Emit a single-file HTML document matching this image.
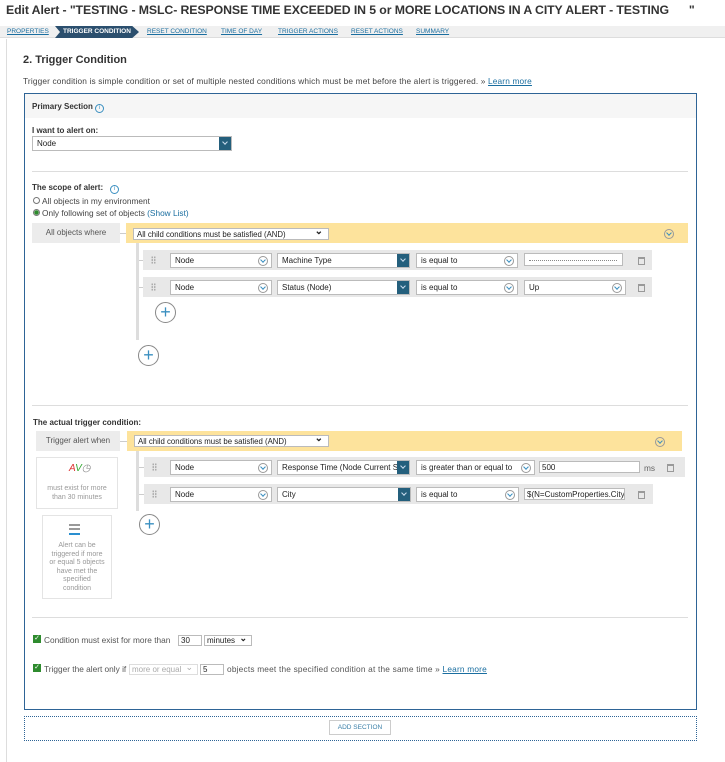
<!DOCTYPE html>
<html><head><meta charset="utf-8"><style>
*{box-sizing:border-box;margin:0;padding:0}
body{width:725px;height:762px;background:#fff;font-family:"Liberation Sans",sans-serif;color:#333;position:relative;overflow:hidden}
.a{position:absolute}
.t{font-size:8.3px;color:#444;white-space:nowrap}
.sel{position:absolute;height:15px;border:1px solid #bbb;background:#fff;font-size:8px;color:#222;padding:2px 4px;white-space:nowrap;overflow:hidden}
.circ{position:absolute;width:10px;height:10px;border:1px solid #999;border-radius:50%;top:2px;right:3px}
.circ:after{content:"";position:absolute;left:2px;top:1px;width:3px;height:3px;border-right:1px solid #3a8fc0;border-bottom:1px solid #3a8fc0;transform:rotate(45deg)}
.dk{position:absolute;right:-1px;top:-1px;width:13px;height:15px;background:#245f7c}
.dk:after{content:"";position:absolute;left:4px;top:4px;width:3px;height:3px;border-right:1px solid #cde;border-bottom:1px solid #cde;transform:rotate(45deg)}
.row{position:absolute;background:#e8e8e8;height:20px}
.dots{position:absolute;left:8px;top:6px;width:5px;height:8px;background:radial-gradient(circle,#aaa 0.8px,transparent 1px) 0 0/2.5px 2.7px}
.trash{position:absolute;width:7px;height:8px;border:1px solid #999;border-top:2px solid #999}
.plus{position:absolute;width:21px;height:21px;border:1px solid #888;border-radius:50%;text-align:center;line-height:18px;color:#3a8fc0;font-size:18px;font-weight:300}
.hr{position:absolute;height:1px;background:#ddd}
.yb{position:absolute;background:#fde39c;height:20px}
.gl{position:absolute;background:#ececec;font-size:8px;color:#555;text-align:center;line-height:20px;height:20px}
.bc{font-size:6.5px;color:#1a6ea0;text-decoration:underline;white-space:nowrap;position:absolute;top:28px}
.chk{position:absolute;width:8px;height:8px;background:#2e8b2e;color:#fff;font-size:7px;line-height:8px;text-align:center}
.lnk{color:#1a6ea0;text-decoration:underline}
</style></head><body>
<div class="a" style="left:6px;top:3px;font-size:12.3px;font-weight:bold;color:#333;white-space:nowrap;letter-spacing:-0.1px">Edit Alert - "TESTING - MSLC- RESPONSE TIME EXCEEDED IN 5 or MORE LOCATIONS IN A CITY ALERT - TESTING &nbsp;&nbsp;&nbsp;&nbsp; "</div>
<div class="a" style="left:0;top:26px;width:725px;height:12px;background:#f0f0f0;border-bottom:1px solid #ddd"></div>
<div class="bc" style="left:7px">PROPERTIES</div>
<div class="a" style="left:55px;top:26px;width:84px;height:12px;background:#2b4f6e;color:#fff;font-size:6.5px;font-weight:bold;line-height:12px;padding-left:8px;clip-path:polygon(0 0,92% 0,100% 50%,92% 100%,0 100%,6% 50%)">TRIGGER CONDITION</div>
<div class="bc" style="left:147px">RESET CONDITION</div>
<div class="bc" style="left:221px">TIME OF DAY</div>
<div class="bc" style="left:278px">TRIGGER ACTIONS</div>
<div class="bc" style="left:351px">RESET ACTIONS</div>
<div class="bc" style="left:416px">SUMMARY</div>
<div class="a" style="left:6px;top:39px;width:1px;height:723px;background:#ddd"></div>
<div class="a" style="left:23px;top:54px;font-size:11px;font-weight:bold;color:#333">2. Trigger Condition</div>
<div class="a t" style="left:23px;top:76px;letter-spacing:0.15px">Trigger condition is simple condition or set of multiple nested conditions which must be met before the alert is triggered. » <span class="lnk">Learn more</span></div>

<div class="a" style="left:24px;top:93px;width:673px;height:617px;border:1px solid #2e6496"></div>
<div class="a" style="left:25px;top:94px;width:671px;height:24px;background:#f6f6f6"></div>
<div class="a" style="left:32px;top:102px;font-size:8px;font-weight:bold;color:#333">Primary Section <span style="display:inline-block;width:9px;height:9px;border:1px solid #3a8fc0;border-radius:50%;color:#3a8fc0;font-size:6px;line-height:7px;text-align:center;font-weight:normal">i</span></div>
<div class="a" style="left:32px;top:126px;font-size:8px;font-weight:bold">I want to alert on:</div>
<div class="sel" style="left:32px;top:136px;width:200px">Node<div class="dk"></div></div>
<div class="hr" style="left:32px;top:171px;width:656px"></div>
<div class="a" style="left:32px;top:183px;font-size:8px;font-weight:bold">The scope of alert: &nbsp;&nbsp;<span style="display:inline-block;width:9px;height:9px;border:1px solid #3a8fc0;border-radius:50%;color:#3a8fc0;font-size:6px;line-height:7px;text-align:center;font-weight:normal">i</span></div>
<div class="a" style="left:33px;top:197px;width:7px;height:7px;border:1px solid #777;border-radius:50%"></div>
<div class="a t" style="left:42px;top:196px">All objects in my environment</div>
<div class="a" style="left:33px;top:209px;width:7px;height:7px;border:1px solid #777;border-radius:50%;background:radial-gradient(circle,#2e8b2e 2px,#fff 2.5px)"></div>
<div class="a t" style="left:42px;top:208px">Only following set of objects <span style="color:#1a6ea0">(Show List)</span></div>

<div class="gl" style="left:32px;top:223px;width:88px">All objects where</div>
<div class="a" style="left:120px;top:233px;width:6px;height:1px;background:#ccc"></div>
<div class="yb" style="left:126px;top:223px;width:562px"></div>
<div class="sel" style="left:133px;top:228px;width:196px;height:12px;padding:1px 3px;font-size:7.8px">All child conditions must be satisfied (AND)<span style="position:absolute;right:5px;top:-3px;font-size:10px;font-weight:bold">&#8964;</span></div>
<div class="circ" style="position:absolute;left:664px;top:229px"></div>
<div class="a" style="left:136px;top:243px;width:3px;height:97px;background:#ddd"></div>
<div class="a" style="left:139px;top:260px;width:5px;height:1px;background:#ccc"></div>
<div class="a" style="left:139px;top:287px;width:5px;height:1px;background:#ccc"></div>
<div class="row" style="left:143px;top:250px;width:509px"><div class="dots"></div></div>
<div class="sel" style="left:170px;top:253px;width:102px">Node<div class="circ"></div></div>
<div class="sel" style="left:277px;top:253px;width:133px">Machine Type<div class="dk"></div></div>
<div class="sel" style="left:416px;top:253px;width:102px">is equal to<div class="circ"></div></div>
<div class="sel" style="left:524px;top:253px;width:99px;height:13px"><div style="border-bottom:1px dotted #888;width:88px;height:5px"></div></div>
<div class="trash" style="left:638px;top:257px"></div>
<div class="row" style="left:143px;top:277px;width:509px"><div class="dots"></div></div>
<div class="sel" style="left:170px;top:280px;width:102px">Node<div class="circ"></div></div>
<div class="sel" style="left:277px;top:280px;width:133px">Status (Node)<div class="dk"></div></div>
<div class="sel" style="left:416px;top:280px;width:102px">is equal to<div class="circ"></div></div>
<div class="sel" style="left:524px;top:280px;width:102px">Up<div class="circ"></div></div>
<div class="trash" style="left:638px;top:284px"></div>
<div class="plus" style="left:155px;top:302px">+</div>
<div class="plus" style="left:138px;top:345px">+</div>

<div class="hr" style="left:32px;top:405px;width:656px"></div>
<div class="a" style="left:33px;top:418px;font-size:8px;font-weight:bold">The actual trigger condition:</div>
<div class="gl" style="left:36px;top:431px;width:84px">Trigger alert when</div>
<div class="a" style="left:120px;top:441px;width:7px;height:1px;background:#ccc"></div>
<div class="yb" style="left:127px;top:431px;width:555px"></div>
<div class="sel" style="left:134px;top:435px;width:195px;height:12px;padding:1px 3px;font-size:7.8px">All child conditions must be satisfied (AND)<span style="position:absolute;right:5px;top:-3px;font-size:10px;font-weight:bold">&#8964;</span></div>
<div class="circ" style="position:absolute;left:655px;top:437px"></div>
<div class="a" style="left:136px;top:451px;width:3px;height:60px;background:#ddd"></div>
<div class="a" style="left:139px;top:467px;width:5px;height:1px;background:#ccc"></div>
<div class="a" style="left:139px;top:494px;width:5px;height:1px;background:#ccc"></div>
<div class="row" style="left:144px;top:457px;width:541px"><div class="dots"></div></div>
<div class="sel" style="left:170px;top:460px;width:102px">Node<div class="circ"></div></div>
<div class="sel" style="left:277px;top:460px;width:133px;padding-right:14px">Response Time (Node Current S<div class="dk"></div></div>
<div class="sel" style="left:416px;top:460px;width:119px">is greater than or equal to<div class="circ"></div></div>
<div class="sel" style="left:539px;top:461px;width:101px;height:12px;padding:1px 2px">500</div>
<div class="a t" style="left:644px;top:463px;color:#666">ms</div>
<div class="trash" style="left:667px;top:464px"></div>
<div class="row" style="left:144px;top:484px;width:509px"><div class="dots"></div></div>
<div class="sel" style="left:170px;top:487px;width:102px">Node<div class="circ"></div></div>
<div class="sel" style="left:277px;top:487px;width:134px">City<div class="dk"></div></div>
<div class="sel" style="left:416px;top:487px;width:103px">is equal to<div class="circ"></div></div>
<div class="sel" style="left:524px;top:488px;width:101px;height:12px;padding:1px 2px">$(N=CustomProperties.City</div>
<div class="trash" style="left:638px;top:491px"></div>
<div class="plus" style="left:139px;top:514px">+</div>

<div class="a" style="left:36px;top:457px;width:82px;height:52px;border:1px solid #e4e4e4;text-align:center;font-size:7px;color:#999;padding:26px 8px 0;line-height:9px">must exist for more than 30 minutes
<div class="a" style="left:32px;top:6px;font-size:10px;color:#d33;font-style:italic">A<span style="color:#3a3">V</span><span style="color:#888">◷</span></div></div>
<div class="a" style="left:42px;top:515px;width:70px;height:84px;border:1px solid #e4e4e4;text-align:center;font-size:7px;color:#999;padding:26px 6px 0;line-height:8.5px">Alert can be triggered if more or equal 5 objects have met the specified condition
<div class="a" style="left:26px;top:8px;width:11px;height:11px;background:linear-gradient(#999 0 2px,#fff 2px 4px,#999 4px 6px,#fff 6px 9px,#2a8fd0 9px 11px)"></div></div>

<div class="hr" style="left:32px;top:617px;width:656px"></div>
<div class="chk" style="left:33px;top:635px">✓</div>
<div class="a t" style="left:44px;top:635px;color:#555">Condition must exist for more than</div>
<div class="sel" style="left:178px;top:635px;width:24px;height:11px;padding:0 2px">30</div>
<div class="sel" style="left:204px;top:635px;width:48px;height:11px;padding:0 2px">minutes<span style="position:absolute;right:4px;top:-3px;font-weight:bold;font-size:9px">&#8964;</span></div>
<div class="chk" style="left:33px;top:664px">✓</div>
<div class="a t" style="left:44px;top:664px;color:#555">Trigger the alert only if</div>
<div class="sel" style="left:129px;top:664px;width:69px;height:11px;padding:0 2px;color:#aaa;border-color:#ddd">more or equal<span style="position:absolute;right:4px;top:-3px;font-size:9px">&#8964;</span></div>
<div class="sel" style="left:200px;top:664px;width:24px;height:11px;padding:0 2px">5</div>
<div class="a t" style="left:227px;top:664px;color:#555;letter-spacing:0.2px">objects meet the specified condition at the same time » <span class="lnk">Learn more</span></div>

<div class="a" style="left:24px;top:716px;width:673px;height:25px;border:1px dotted #2e6496"></div>
<div class="a" style="left:329px;top:720px;width:62px;height:15px;border:1px solid #ccc;font-size:6.5px;color:#3a7fa8;text-align:center;line-height:13px">ADD SECTION</div>
</body></html>
